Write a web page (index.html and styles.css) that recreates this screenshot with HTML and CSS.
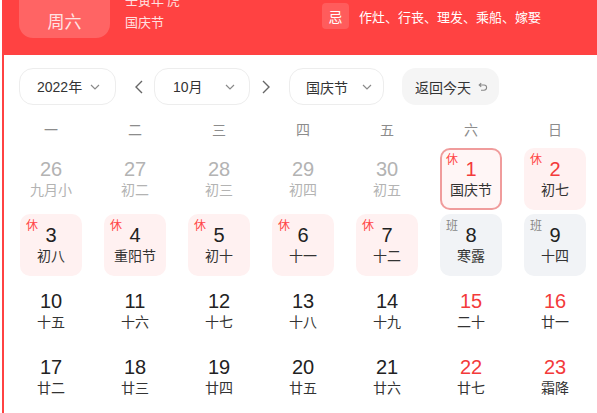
FILE: index.html
```html
<!DOCTYPE html>
<html lang="zh">
<head>
<meta charset="utf-8">
<link rel="stylesheet" href="styles.css">
</head>
<body>
<div class="app">
  <div class="header">
    <div class="today">
      <div class="today-num">1</div>
      <div class="today-week">周六</div>
    </div>
    <div class="info">
      <div class="info-line">壬寅年 虎</div>
      <div class="info-line">国庆节</div>
    </div>
    <div class="ji">
      <div class="ji-tag">忌</div>
      <div class="ji-text">作灶、行丧、理发、乘船、嫁娶</div>
    </div>
  </div>
  <div class="panel">
    <div class="controls">
      <div class="select select-year"><span>2022年</span><svg class="chev" width="10" height="6" viewBox="0 0 10 6"><polyline points="1,1 5,5 9,1" fill="none" stroke="#8a8a8a" stroke-width="1.2"/></svg></div>
      <svg class="arrow arrow-prev" width="10" height="16" viewBox="0 0 10 16"><polyline points="8,2 2,8 8,14" fill="none" stroke="#666" stroke-width="1.4"/></svg>
      <div class="select select-month"><span>10月</span><svg class="chev" width="10" height="6" viewBox="0 0 10 6"><polyline points="1,1 5,5 9,1" fill="none" stroke="#8a8a8a" stroke-width="1.2"/></svg></div>
      <svg class="arrow arrow-next" width="10" height="16" viewBox="0 0 10 16"><polyline points="2,2 8,8 2,14" fill="none" stroke="#666" stroke-width="1.4"/></svg>
      <div class="select select-fest"><span>国庆节</span><svg class="chev" width="10" height="6" viewBox="0 0 10 6"><polyline points="1,1 5,5 9,1" fill="none" stroke="#8a8a8a" stroke-width="1.2"/></svg></div>
      <div class="back-btn"><span>返回今天</span><svg class="back-icon" width="10" height="10" viewBox="0 0 10 10"><path d="M3.2 1.2 L1.2 3 L3.2 4.8 M1.4 3 H6 A2.6 2.6 0 0 1 6 8.2 H3" fill="none" stroke="#888" stroke-width="1.1"/></svg></div>
    </div>

    <div class="grid">
      <div class="wk">一</div><div class="wk">二</div><div class="wk">三</div><div class="wk">四</div><div class="wk">五</div><div class="wk">六</div><div class="wk">日</div>

      <div class="cell"><div class="day muted"><div class="num">26</div><div class="lunar">九月小</div></div></div>
      <div class="cell"><div class="day muted"><div class="num">27</div><div class="lunar">初二</div></div></div>
      <div class="cell"><div class="day muted"><div class="num">28</div><div class="lunar">初三</div></div></div>
      <div class="cell"><div class="day muted"><div class="num">29</div><div class="lunar">初四</div></div></div>
      <div class="cell"><div class="day muted"><div class="num">30</div><div class="lunar">初五</div></div></div>
      <div class="cell"><div class="day rest selected red"><span class="tag">休</span><div class="num">1</div><div class="lunar">国庆节</div></div></div>
      <div class="cell"><div class="day rest red"><span class="tag">休</span><div class="num">2</div><div class="lunar">初七</div></div></div>

      <div class="cell"><div class="day rest"><span class="tag">休</span><div class="num">3</div><div class="lunar">初八</div></div></div>
      <div class="cell"><div class="day rest"><span class="tag">休</span><div class="num">4</div><div class="lunar">重阳节</div></div></div>
      <div class="cell"><div class="day rest"><span class="tag">休</span><div class="num">5</div><div class="lunar">初十</div></div></div>
      <div class="cell"><div class="day rest"><span class="tag">休</span><div class="num">6</div><div class="lunar">十一</div></div></div>
      <div class="cell"><div class="day rest"><span class="tag">休</span><div class="num">7</div><div class="lunar">十二</div></div></div>
      <div class="cell"><div class="day work"><span class="tag">班</span><div class="num">8</div><div class="lunar">寒露</div></div></div>
      <div class="cell"><div class="day work"><span class="tag">班</span><div class="num">9</div><div class="lunar">十四</div></div></div>

      <div class="cell"><div class="day"><div class="num">10</div><div class="lunar">十五</div></div></div>
      <div class="cell"><div class="day"><div class="num">11</div><div class="lunar">十六</div></div></div>
      <div class="cell"><div class="day"><div class="num">12</div><div class="lunar">十七</div></div></div>
      <div class="cell"><div class="day"><div class="num">13</div><div class="lunar">十八</div></div></div>
      <div class="cell"><div class="day"><div class="num">14</div><div class="lunar">十九</div></div></div>
      <div class="cell"><div class="day red"><div class="num">15</div><div class="lunar">二十</div></div></div>
      <div class="cell"><div class="day red"><div class="num">16</div><div class="lunar">廿一</div></div></div>

      <div class="cell"><div class="day"><div class="num">17</div><div class="lunar">廿二</div></div></div>
      <div class="cell"><div class="day"><div class="num">18</div><div class="lunar">廿三</div></div></div>
      <div class="cell"><div class="day"><div class="num">19</div><div class="lunar">廿四</div></div></div>
      <div class="cell"><div class="day"><div class="num">20</div><div class="lunar">廿五</div></div></div>
      <div class="cell"><div class="day"><div class="num">21</div><div class="lunar">廿六</div></div></div>
      <div class="cell"><div class="day red"><div class="num">22</div><div class="lunar">廿七</div></div></div>
      <div class="cell"><div class="day red"><div class="num">23</div><div class="lunar">霜降</div></div></div>
    </div>
  </div>
</div>
</body>
</html>
```

FILE: styles.css
```css
* { box-sizing: border-box; }
html, body { margin: 0; padding: 0; background: #fff; overflow: hidden; }
body {
  font-family: "Liberation Sans", "Noto Sans CJK SC", sans-serif;
  width: 597px;
  height: 413px;
}
.app {
  margin-left: 2px;
  background: #ff4242;
  height: 413px;
  display: flex;
  flex-direction: column;
}
.header {
  height: 55px;
  flex: none;
  display: flex;
  align-items: flex-start;
  overflow: hidden;
  color: #fff;
}
.today {
  width: 91px;
  height: 80px;
  margin: -42px 0 0 17px;
  border-radius: 14px;
  background: rgba(255, 255, 255, 0.18);
  display: flex;
  flex-direction: column;
  align-items: center;
  justify-content: flex-end;
  padding-bottom: 6px;
  color: #ffe3e3;
  flex: none;
}
.today-num { font-size: 36px; line-height: 40px; margin-bottom: 3px; color: #fff; }
.today-week { font-family: "Noto Sans CJK SC", sans-serif; font-size: 17px; line-height: 22px; }
.info {
  width: 197px;
  margin: -11px 0 0 15px;
  font-family: "Noto Sans CJK SC", sans-serif;
  font-size: 13px;
  color: #ffe0e0;
  flex: none;
}
.info-line { line-height: 22px; }
.ji {
  display: flex;
  align-items: center;
  margin-top: 3px;
  height: 26px;
  font-family: "Noto Sans CJK SC", sans-serif;
}
.ji-tag {
  width: 27px;
  height: 26px;
  border-radius: 4px;
  background: rgba(255, 255, 255, 0.14);
  display: flex;
  align-items: center;
  justify-content: center;
  font-size: 14px;
  color: #fff;
}
.ji-text { margin-left: 10px; font-size: 13px; color: #fff; }

.panel {
  flex: 1;
  margin-left: 2px;
  background: #fff;
  padding-top: 13px;
}
.controls {
  display: flex;
  align-items: center;
  height: 37px;
  padding-left: 15px;
}
.select {
  height: 37px;
  border: 1px solid #ededed;
  border-radius: 14px;
  display: flex;
  align-items: center;
  justify-content: space-between;
  font-size: 14px;
  color: #333;
  flex: none;
}
.select span { line-height: 20px; }
.select-year { width: 97px; padding: 0 15px 0 17px; }
.select-month { width: 96px; padding: 0 14px 0 18px; }
.select-fest { width: 95px; padding: 0 11px 0 16px; font-family: "Noto Sans CJK SC", sans-serif; }
.chev { flex: none; }
.arrow { flex: none; }
.arrow-prev { margin: 0 10px 0 18px; }
.arrow-next { margin: 0 18px 0 11px; }
.back-btn {
  margin-left: 18px;
  width: 97px;
  height: 37px;
  border-radius: 14px;
  background: #f5f5f5;
  display: flex;
  align-items: center;
  padding-left: 13px;
  font-family: "Noto Sans CJK SC", sans-serif;
  font-size: 14px;
  color: #333;
}
.back-icon { margin-left: 7px; }

.grid {
  margin: 7px 0 0 5px;
  display: grid;
  grid-template-columns: repeat(7, 84px);
  grid-template-rows: 34px repeat(4, 66px);
}
.wk {
  display: flex;
  align-items: center;
  justify-content: center;
  font-family: "Noto Sans CJK SC", sans-serif;
  font-size: 14px;
  color: #8c8c8c;
}
.cell {
  display: flex;
  align-items: center;
  justify-content: center;
}
.day {
  position: relative;
  width: 62px;
  height: 62px;
  border: 2px solid transparent;
  border-radius: 10px;
  padding-top: 9px;
  display: flex;
  flex-direction: column;
  align-items: center;
  color: #222;
}
.num { font-size: 20px; line-height: 21px; }
.lunar {
  font-family: "Noto Sans CJK SC", sans-serif;
  font-size: 14px;
  line-height: 18px;
  color: #333;
}
.muted .num, .muted .lunar { color: #b3b3b3; }
.red .num { color: #f33a3a; }
.rest { background: #fff1f1; }
.work { background: #f1f3f6; }
.selected { border-color: #f09c9c; background: #fff6f6; }
.tag {
  position: absolute;
  left: 4px;
  top: 2px;
  font-family: "Noto Sans CJK SC", sans-serif;
  font-size: 12px;
  line-height: 14px;
}
.rest .tag { color: #ff4545; }
.work .tag { color: #888; }
```
